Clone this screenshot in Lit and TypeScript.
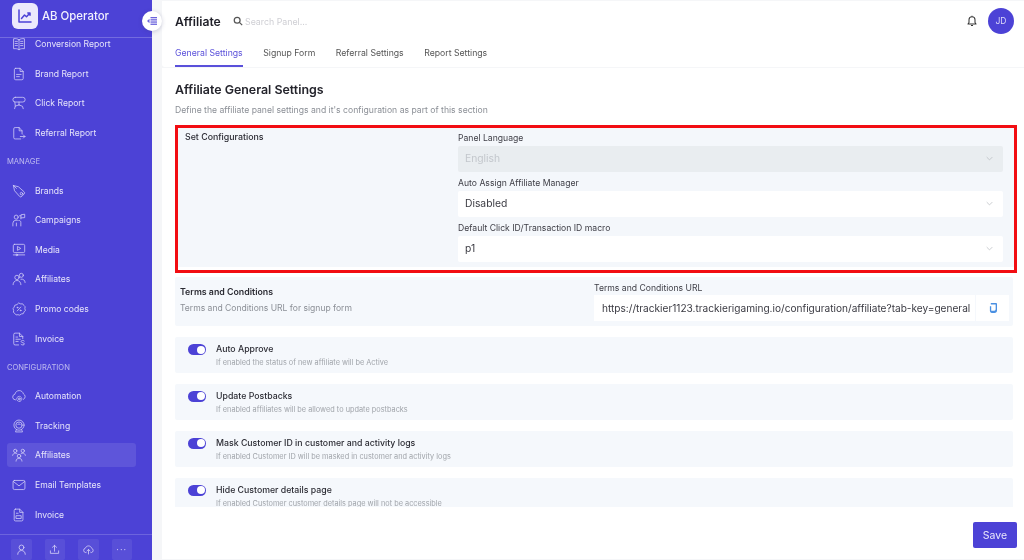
import { LitElement, html, css, svg } from "lit";
import { customElement } from "lit/decorators.js";

const icons: Record<string, unknown> = {
  book: svg`<path d="M8 3.2C6.6 2 4.200 1.600 1.800 2v11.400c2.400-.4 4.800 0 6.200 1.200 1.400-1.200 3.800-1.600 6.200-1.200V2C11.800 1.600 9.400 2 8 3.200zM8 3.200v11.400M3.600 5h2.600M3.600 7.400h2.600M3.600 9.800h2.600M9.800 5h2.600M9.800 7.400h2.600M9.800 9.800h2.600"/>`,
  doc: svg`<path d="M4.200 1.500h5l3.600 3.600v8a1.500 1.500 0 0 1-1.500 1.500H4.200a1.500 1.500 0 0 1-1.500-1.500V3a1.500 1.500 0 0 1 1.500-1.500zM9.200 1.500v3.600h3.600M5.200 8.500h5.200M5.200 11h3.200"/>`,
  click: svg`<rect x="1" y="1.500" width="14" height="5.400" rx="2.700"/><path d="M8 6.900v3.300M8 10.200l-4.200 1.300-.8 3M8 10.200l4 1.600.8 2.700M3.200 6.900l.6 4.600"/>`,
  referral: svg`<path d="M11.500 9V5.500L8.200 1.800H3.600A1.500 1.500 0 0 0 2 3.300v10a1.500 1.500 0 0 0 1.600 1.500h6.400M8.200 1.800v3.700h3.300M9.500 12h5.300M13 10.200l1.800 1.800-1.800 1.800"/>`,
  tag: svg`<path d="M2 1.800l5.400 1.400 6.300 5.600a1.800 1.800 0 0 1 .1 2.600l-2.500 2.700a1.800 1.800 0 0 1-2.600.1L3.200 8zM5 5L1.400 1.400"/><circle cx="10.800" cy="11" r="1.400"/>`,
  camp: svg`<circle cx="4.800" cy="4.700" r="2.300"/><path d="M1 14.800V11.500a3.500 3.500 0 0 1 3.500-3.200h1.800M5 14.800v-3.300M7.800 8.500c1.200-.2 2.300.8 2.300 2.200v4.100"/><path d="M10.200 6.800V2l4.300-.6v3.900l-4.300.3M8.600 3.200h1.600"/>`,
  media: svg`<rect x="1.500" y="1.500" width="13" height="9.500" rx="1.500"/><path d="M6.600 4.200l3.400 2-3.400 2zM1.500 13.600h13"/><circle cx="5.500" cy="13.600" r=".9"/>`,
  people: svg`<circle cx="5.700" cy="6.200" r="2.500"/><path d="M1.200 14.500c0-2.700 2-4.800 4.500-4.800s4.500 2.100 4.500 4.800"/><circle cx="10.700" cy="3.800" r="2.300"/><path d="M10.200 8.200c2.500-.6 4.800 1.200 4.800 3.800"/>`,
  promo: svg`<path d="M8 1.300l2 .9 2.200-.1 1.300 1.800 1.500 1.500-.3 2.200.6 2.100-1.500 1.600-.9 2-2.200.4L8.800 15l-2-.5-2.100.3-1.400-1.700-1.700-1.300.3-2.200-.7-2 1.300-1.800.7-2.100 2.100-.6z"/><path d="M6 10.200l4-4.400"/><circle cx="6.200" cy="6.400" r=".5"/><circle cx="9.800" cy="9.600" r=".5"/>`,
  invoice: svg`<path d="M7.500 14.800H3.500A1.500 1.500 0 0 1 2 13.300V2.800a1.500 1.500 0 0 1 1.500-1.500h5l3.800 3.800v2.400M8.500 1.300v3.800h3.800M4.500 5.800h2M4.500 8.300h5M4.500 10.800h2.500M14 10.200c-.6-.9-3.600-1-3.600.7 0 1.600 3.800 1 3.800 2.700 0 1.600-3.200 1.600-3.900.5"/>`,
  cloud: svg`<path d="M4 12.500A3.300 3.300 0 0 1 3.300 6C3.800 3.600 5.700 1.800 8.200 1.800c2.400 0 4.300 1.600 4.800 3.800a3.500 3.500 0 0 1 2 3.200 3.400 3.400 0 0 1-2 3.100"/><circle cx="8.300" cy="11.300" r="1.100"/><circle cx="8.300" cy="11.300" r="2.900" stroke-dasharray="1.600 1.200"/>`,
  cam: svg`<circle cx="8" cy="7" r="5.800"/><circle cx="8" cy="7" r="3.600"/><path d="M6.600 6.400a1.600 1.600 0 0 1 2.800 0M5 12.200L4 14.800h8l-1-2.600"/>`,
  group: svg`<circle cx="8" cy="9.200" r="2"/><path d="M4.600 15c0-1.900 1.500-3.300 3.400-3.300s3.400 1.400 3.400 3.300"/><circle cx="3.700" cy="3.300" r="1.900"/><circle cx="12.300" cy="3.300" r="1.900"/><path d="M.7 8.400c.3-1.500 1.500-2.500 3-2.500.8 0 1.500.3 2 .7M15.300 8.400c-.3-1.500-1.500-2.500-3-2.500-.8 0-1.500.3-2 .7"/>`,
  mail: svg`<rect x="1.200" y="2.800" width="13.600" height="10.400" rx="1.600"/><path d="M1.500 4l6.500 5 6.500-5"/>`,
  file: svg`<path d="M4 1.300h4.800l3.700 3.700v8.300a1.500 1.500 0 0 1-1.500 1.500H4a1.500 1.500 0 0 1-1.500-1.500V2.800A1.500 1.500 0 0 1 4 1.300zM8.800 1.300V5h3.700M5 6h2M5 8.800h5.500v3.200H5z"/>`,
  user: svg`<circle cx="8" cy="5" r="3.500"/><path d="M2.500 15c0-3.300 2.400-5.500 5.500-5.500s5.500 2.200 5.500 5.500"/>`,
  upload: svg`<path d="M8 10.500V2M5 4.800L8 2l3 2.800M2 10v3.600h12V10"/>`,
  cloudup: svg`<path d="M4.500 12.500H4A3.300 3.300 0 0 1 3.500 6C4.200 4 6 2.800 8 2.800c2.300 0 4.100 1.500 4.600 3.500a3.200 3.200 0 0 1-.6 6.200h-.5M8 14.500V8M5.800 10L8 8l2.200 2"/>`,
};

const ic = (n: string) => html`<svg class="ic" viewBox="0 0 16 16">${icons[n]}</svg>`;

const reports = [["book","Conversion Report"],["doc","Brand Report"],["click","Click Report"],["referral","Referral Report"]];
const manage = [["tag","Brands"],["camp","Campaigns"],["media","Media"],["people","Affiliates"],["promo","Promo codes"],["invoice","Invoice"]];
const config = [["cloud","Automation"],["cam","Tracking"],["group","Affiliates"],["mail","Email Templates"],["file","Invoice"]];

const toggles = [
  ["Auto Approve","If enabled the status of new affiliate will be Active"],
  ["Update Postbacks","If enabled affiliates will be allowed to update postbacks"],
  ["Mask Customer ID in customer and activity logs","If enabled Customer ID will be masked in customer and activity logs"],
  ["Hide Customer details page","If enabled Customer customer details page will not be accessible"],
];

const chevron = html`<svg class="chev" viewBox="0 0 10 6"><path d="M1 1l4 4 4-4"/></svg>`;

@customElement("app-root")
export class AppRoot extends LitElement {
  static styles = css`
    :host { display: flex; width: 1024px; height: 560px; overflow: hidden; position: relative;
      font-family: Inter, "Noto Sans", sans-serif; background: #f7f8fa; color: #2b2b33; filter: blur(.3px); }
    * { box-sizing: border-box; }

    .side { width: 152px; flex: none; height: 560px; background: #4c42d6; display: flex; flex-direction: column; color: #e6e4fa; }
    .brand { height: 38px; flex: none; display: flex; align-items: flex-start; gap: 4px; padding: 3px 0 0 12px; border-bottom: 1px solid rgba(255,255,255,.22); position: relative; z-index: 1; background: #4c42d6; }
    .logo { width: 26px; height: 26px; border-radius: 6px; background: #ece9fc; display: flex; align-items: center; justify-content: center; }
    .logo svg { width: 16px; height: 16px; fill: none; stroke: #4c42d6; stroke-width: 1.500; stroke-linecap: round; stroke-linejoin: round; }
    .brand-name { font-size: 11.400px; font-weight: 500; line-height: 26px; color: #f2f1fd; }
    .nav { flex: 1; overflow: hidden; }
    .nav-in { margin-top: -8.500px; display: flex; flex-direction: column; }
    .sec { height: 28px; flex: none; display: flex; align-items: center; padding-left: 7px; font-size: 7.600px; color: rgba(255,255,255,.62); }
    .item { height: 24px; flex: none; margin: 2.800px 16px 2.800px 7px; padding-left: 5px; display: flex; align-items: center; gap: 9px; font-size: 8.600px; border-radius: 3px; color: #e6e4fa; }
    .item.on { background: rgba(255,255,255,.1); }
    .ic { width: 14px; height: 14px; flex: none; fill: none; stroke: #d3cff6; stroke-width: .9; stroke-linecap: round; stroke-linejoin: round; }
    .foot { height: 26px; flex: none; border-top: 1px solid rgba(255,255,255,.18); padding: 4px 0 0 11px; display: flex; gap: 13px; }
    .fb { width: 20.500px; height: 21px; background: rgba(255,255,255,.07); border-radius: 2px; display: flex; align-items: center; justify-content: center; font-size: 9px; letter-spacing: 1px; color: #d3cff6; }
    .fb .ic { width: 11px; height: 11px; stroke-width: 1.200; }

    .collapse { position: absolute; left: 142px; top: 11px; width: 20px; height: 20px; border-radius: 50%; background: #fff; box-shadow: 0 1px 4px rgba(60,60,120,.25); display: flex; align-items: center; justify-content: center; z-index: 2; }
    .collapse svg { width: 10px; height: 8px; fill: #6a62dc; }

    .main { flex: 1; min-width: 0; padding: 1px 0 1px 10px; display: flex; flex-direction: column; gap: 1px; background: #f5f6f8; }
    .head { height: 66px; flex: none; background: #fff; border-bottom-left-radius: 3px; padding: 0 10px 0 13px; display: flex; flex-direction: column; }
    .top { height: 40px; display: flex; align-items: center; }
    .title { font-size: 12.200px; font-weight: 600; color: #1f1f28; width: 58px; }
    .search { width: 10px; height: 10px; fill: none; stroke: #555; stroke-width: 1.500; margin-right: 2px; }
    .ph { font-size: 8.800px; color: #cfcfd4; }
    .bell { margin-left: auto; width: 12px; height: 12px; fill: none; stroke: #333; stroke-width: 1.200; stroke-linejoin: round; margin-right: 10px; }
    .avatar { width: 26px; height: 26px; border-radius: 50%; background: #4c42d6; color: #dcd9f8; font-size: 8.500px; display: flex; align-items: center; justify-content: center; }
    .tabs { display: flex; gap: 20.500px; height: 26px; font-size: 8.700px; color: #555; }
    .tab { height: 26px; padding-top: 7px; border-bottom: 2px solid transparent; }
    .tab.on { color: #5a50da; border-bottom-color: #5a50da; }

    .content { flex: 1; min-height: 0; background: #fff; padding: 0 7px 0 13px; display: flex; flex-direction: column; }
    h1 { margin: 13px 0 0; height: 18px; font-size: 12.400px; line-height: 18px; font-weight: 600; color: #24242c; }
    .desc { margin-top: 4px; height: 14px; font-size: 8.650px; line-height: 15px; color: #8b8f96; }

    .box { margin-top: 8px; height: 148px; flex: none; border: 3px solid #f20d12; background: #fff; padding-bottom: 3px; }
    .box-in { height: 100%; background: #f4f7fb; display: grid; grid-template-columns: 280px 1fr; padding-right: 11px; }
    .box-t { padding: 3px 0 0 7px; font-size: 8.800px; font-weight: 500; color: #2b2b33; line-height: 12px; }
    .fields { display: flex; flex-direction: column; margin-top: -1px; }
    .lab { height: 19px; font-size: 8.650px; line-height: 22px; color: #3e3e46; }
    .sel { height: 26px; background: #fff; border-radius: 2px; display: flex; align-items: center; justify-content: space-between; padding: 0 7px 2px; font-size: 10.300px; color: #3a3a42; }
    .sel.off { background: #e9edf0; color: #c3c7cc; }
    .chev { width: 7px; height: 5px; fill: none; stroke: #b5b8bd; stroke-width: 1; margin-right: 3px; }

    .terms { margin: 4px 4px 0 0; height: 49px; flex: none; background: #f5f8fc; border-radius: 2px; display: grid; grid-template-columns: 414px 1fr; padding: 4px 4px 0 5px; }
    .t1 { font-size: 8.800px; font-weight: 600; color: #2b2b33; line-height: 12px; margin-top: 5px; }
    .t2 { font-size: 8.550px; color: #8b8f96; line-height: 12px; margin-top: 4px; }
    .tlab { height: 14px; font-size: 8.650px; line-height: 15px; color: #3e3e46; }
    .url { height: 26px; display: flex; gap: 1px; }
    .url-t { flex: 1; background: #fff; display: flex; align-items: center; padding-left: 8px; font-size: 10.100px; color: #3a3a42; white-space: nowrap; overflow: hidden; }
    .copy { width: 33px; background: #fff; display: flex; align-items: center; justify-content: center; }
    .copy svg { width: 8px; height: 10px; fill: #4a90e2; }

    .list { flex: none; height: 170px; overflow: hidden; margin: 11px 4px 0 0; display: flex; flex-direction: column; gap: 10.850px; }
    .row { height: 36px; flex: none; background: #f5f8fc; border-radius: 2px; display: flex; gap: 10px; padding: 7px 0 0 13px; }
    .sw { width: 18px; height: 11px; border-radius: 6px; background: #4c42d6; display: flex; justify-content: flex-end; align-items: center; padding-right: 1.500px; flex: none; }
    .sw i { width: 8px; height: 8px; background: #fff; border-radius: 50%; display: block; }
    .r1 { font-size: 8.750px; line-height: 11px; color: #2b2b33; font-weight: 500; }
    .r2 { font-size: 7.350px; line-height: 11px; margin-top: 2px; color: #a0a4aa; }
    .actions { flex: none; height: 50px; display: flex; justify-content: flex-end; padding-top: 15px; }
    .save { width: 44px; height: 26px; background: #4c42d6; color: #e9e7fb; border-radius: 2px; display: flex; align-items: center; justify-content: center; font-size: 10.500px; }
  `;

  private navItem(i: string[], on = false) {
    return html`<div class="item ${on ? "on" : ""}">${ic(i[0])}<span>${i[1]}</span></div>`;
  }

  render() {
    return html`
      <aside class="side">
        <div class="brand">
          <div class="logo"><svg viewBox="0 0 16 16"><path d="M2 2v12h12M4.500 10.500l3-3.500 2 1.800L13 5M10.800 5H13v2.200"/></svg></div>
          <div class="brand-name">AB Operator</div>
        </div>
        <nav class="nav"><div class="nav-in">
          ${reports.map((i) => this.navItem(i))}
          <div class="sec">MANAGE</div>
          ${manage.map((i) => this.navItem(i))}
          <div class="sec">CONFIGURATION</div>
          ${config.map((i) => this.navItem(i, i[1] === "Affiliates"))}
        </div></nav>
        <div class="foot">
          <div class="fb">${ic("user")}</div>
          <div class="fb">${ic("upload")}</div>
          <div class="fb">${ic("cloudup")}</div>
          <div class="fb">···</div>
        </div>
      </aside>
      <div class="collapse"><svg viewBox="0 0 10 8"><rect x="3.500" y="0" width="6.500" height="1.300"/><rect x="3.500" y="2.200" width="6.500" height="1.300"/><rect x="3.500" y="4.400" width="6.500" height="1.300"/><rect x="3.500" y="6.600" width="6.500" height="1.300"/><path d="M2.500 1.800v4.400L0 4z"/></svg></div>
      <div class="main">
        <header class="head">
          <div class="top">
            <div class="title">Affiliate</div>
            <svg class="search" viewBox="0 0 12 12"><circle cx="5" cy="5" r="3.500"/><path d="M8 8l3 3"/></svg>
            <span class="ph">Search Panel...</span>
            <svg class="bell" viewBox="0 0 12 14"><path d="M6 2a3.500 3.500 0 0 0-3.500 3.500v3.200L1.300 10.600h9.400L9.500 8.700V5.500A3.500 3.500 0 0 0 6 2zM6 1v1M4.800 12.200h2.400"/></svg>
            <div class="avatar">JD</div>
          </div>
          <div class="tabs">
            <div class="tab on">General Settings</div>
            <div class="tab">Signup Form</div>
            <div class="tab">Referral Settings</div>
            <div class="tab">Report Settings</div>
          </div>
        </header>
        <section class="content">
          <h1>Affiliate General Settings</h1>
          <div class="desc">Define the affiliate panel settings and it's configuration as part of this section</div>
          <div class="box"><div class="box-in">
            <div class="box-t">Set Configurations</div>
            <div class="fields">
              <div class="lab">Panel Language</div>
              <div class="sel off"><span>English</span>${chevron}</div>
              <div class="lab">Auto Assign Affiliate Manager</div>
              <div class="sel"><span>Disabled</span>${chevron}</div>
              <div class="lab">Default Click ID/Transaction ID macro</div>
              <div class="sel"><span>p1</span>${chevron}</div>
            </div>
          </div></div>
          <div class="terms">
            <div>
              <div class="t1">Terms and Conditions</div>
              <div class="t2">Terms and Conditions URL for signup form</div>
            </div>
            <div>
              <div class="tlab">Terms and Conditions URL</div>
              <div class="url">
                <div class="url-t">https://trackier1123.trackierigaming.io/configuration/affiliate?tab-key=general</div>
                <div class="copy"><svg viewBox="0 0 9 11"><path d="M2 0h6a1 1 0 0 1 1 1v7a3 3 0 0 1-3 3H3a2 2 0 0 1-2-2V3.500h1.500V8.500h3.500a1.500 1.500 0 0 0 1.500-1.500V1.500H2z"/></svg></div>
              </div>
            </div>
          </div>
          <div class="list">
            ${toggles.map((t) => html`<div class="row"><div class="sw"><i></i></div><div><div class="r1">${t[0]}</div><div class="r2">${t[1]}</div></div></div>`)}
          </div>
          <div class="actions"><div class="save">Save</div></div>
        </section>
      </div>
    `;
  }
}
